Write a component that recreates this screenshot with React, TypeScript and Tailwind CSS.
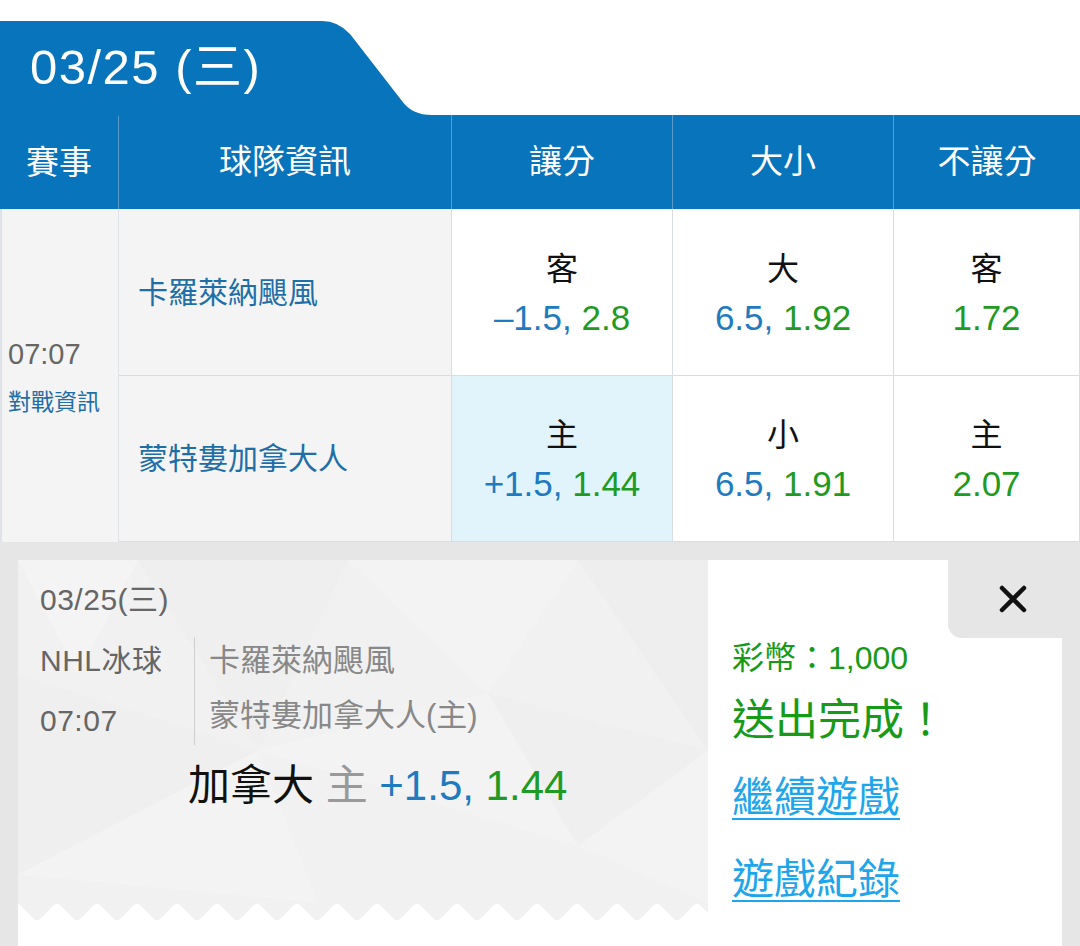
import React from "react";

const font = { fontFamily: '"Liberation Sans", "Noto Sans CJK TC", sans-serif' };

const odds = [
  [
    { label: "客", line: "–1.5,", price: "2.8" },
    { label: "大", line: "6.5,", price: "1.92" },
    { label: "客", line: "", price: "1.72" },
  ],
  [
    { label: "主", line: "+1.5,", price: "1.44", picked: true },
    { label: "小", line: "6.5,", price: "1.91" },
    { label: "主", line: "", price: "2.07" },
  ],
];
const teams = ["卡羅萊納颶風", "蒙特婁加拿大人"];

function OddsCell({ o }: { o: { label: string; line: string; price: string; picked?: boolean } }) {
  return (
    <div
      className={`flex flex-col items-center justify-center border-r border-b border-[#d6dde4] pt-[4px] ${
        o.picked ? "bg-[#e1f4fc]" : "bg-white"
      }`}
    >
      <div className="text-[32px] leading-[40px] text-[#111]">{o.label}</div>
      <div className="mt-[7px] text-[35px] leading-[44px]">
        {o.line && <span className="text-[#1f7bbf]">{o.line} </span>}
        <span className="text-[#1f9a23]">{o.price}</span>
      </div>
    </div>
  );
}

function Pattern() {
  return (
    <svg className="absolute inset-0 h-full w-full" viewBox="0 0 690 360" preserveAspectRatio="none">
      <polygon points="0,0 120,0 60,120" fill="#f4f4f4" />
      <polygon points="120,0 330,0 240,200" fill="#efefef" />
      <polygon points="330,0 560,0 470,140" fill="#f3f3f3" />
      <polygon points="560,0 690,0 690,200" fill="#eeeeee" />
      <polygon points="0,120 240,200 0,330" fill="#efefef" />
      <polygon points="240,200 470,140 560,300" fill="#f3f3f3" />
      <polygon points="470,140 690,200 560,300" fill="#efefef" />
      <polygon points="0,330 240,200 300,360" fill="#f3f3f3" />
      <polygon points="560,300 690,200 690,360" fill="#f3f3f3" />
    </svg>
  );
}

function Zigzag() {
  return (
    <svg className="block h-[17px] w-full" preserveAspectRatio="none">
      <defs>
        <pattern id="zz" width="40" height="17" patternUnits="userSpaceOnUse" x="19">
          <rect width="40" height="17" fill="#f1f1f1" />
          <path d="M2 17 L17 2 Q20 -1 23 2 L38 17 Z" fill="#ffffff" />
        </pattern>
      </defs>
      <rect width="100%" height="17" fill="url(#zz)" />
    </svg>
  );
}

export default function App() {
  return (
    <div className="w-[1080px] h-[946px] overflow-hidden bg-white" style={font}>
      {/* Date tab */}
      <div className="flex pt-[21px]">
        <div className="flex h-[94px] w-[310px] items-center bg-[#0874bc] pl-[30px] text-[49px] tracking-[1.5px] text-white">
          03/25 (三)
        </div>
        <svg width="122" height="94" viewBox="0 0 122 94" className="block">
          <path d="M0 0 H12 Q28 0 40 13 L92 80 Q102 94 122 94 H0 Z" fill="#0874bc" />
        </svg>
      </div>

      {/* Table */}
      <div className="grid grid-cols-[119px_333px_221px_221px_1fr] grid-rows-[94px_167px_166px]">
        {["賽事", "球隊資訊", "讓分", "大小", "不讓分"].map((h, i) => (
          <div
            key={h}
            className={`flex items-center justify-center bg-[#0874bc] text-[33px] text-white ${
              i < 4 ? "border-r border-[#5b9bcc]" : ""
            } ${i === 0 ? "border-t-2 border-t-[#0874bc]" : ""}`}
          >
            {h}
          </div>
        ))}

        <div className="row-span-2 flex flex-col justify-center border-r border-l-2 border-[#dde3e8] bg-[#f4f4f4] pl-[6px]">
          <div className="text-[29px] leading-[36px] text-[#666]">07:07</div>
          <div className="mt-[16px] text-[23px] leading-[28px] text-[#1f6ea8]">對戰資訊</div>
        </div>

        {teams.map((t, r) => (
          <React.Fragment key={t}>
            <div className="flex items-center border-r border-b border-[#d6dde4] bg-[#f4f4f4] pl-[19px] text-[30px] text-[#1f6ea8]">
              {t}
            </div>
            {odds[r].map((o, c) => (
              <OddsCell key={c} o={o} />
            ))}
          </React.Fragment>
        ))}
      </div>

      {/* Bet slip */}
      <div className="h-[404px] bg-[#e6e6e6] px-[18px] pt-[18px]">
        <div className="flex h-full bg-white">
          <div className="flex w-[690px] flex-col">
            <div className="relative h-[343px] bg-[#f1f1f1]">
              <Pattern />
              <div className="relative pl-[22px] pt-[21px] text-[30px] tracking-[0.5px] text-[#666]">
                <div className="leading-[38px]">03/25(三)</div>
                <div className="mt-[18px] flex">
                  <div className="w-[155px] border-r border-[#cfcfcf]">
                    <div className="leading-[48px]">NHL冰球</div>
                    <div className="mt-[12px] leading-[48px]">07:07</div>
                  </div>
                  <div className="pl-[14px] text-[31px] tracking-normal text-[#888]">
                    <div className="leading-[48px]">卡羅萊納颶風</div>
                    <div className="mt-[7px] leading-[48px]">蒙特婁加拿大人(主)</div>
                  </div>
                </div>
                <div className="mt-[16px] pl-[148px] text-[42px] leading-[50px] tracking-normal">
                  <span className="text-[#111]">加拿大 </span>
                  <span className="text-[#999]">主 </span>
                  <span className="text-[#1f7bbf]">+1.5, </span>
                  <span className="text-[#1f9a23]">1.44</span>
                </div>
              </div>
            </div>
            <Zigzag />
          </div>

          <div className="flex flex-1 flex-col">
            <div className="flex justify-end">
              <div className="flex h-[78px] w-[114px] items-center justify-center rounded-bl-[14px] bg-[#e6e6e6] pl-[16px]">
                <svg width="30" height="30" viewBox="0 0 30 30">
                  <path d="M4 4 L26 26 M26 4 L4 26" stroke="#111" strokeWidth="4.5" strokeLinecap="round" />
                </svg>
              </div>
            </div>
            <div className="pl-[24px]">
              <div className="text-[32px] leading-[40px] text-[#179a17]">彩幣：1,000</div>
              <div className="mt-[17px] text-[43px] leading-[50px] text-[#179a17]">送出完成！</div>
              <div className="mt-[28px] text-[42px] leading-[50px] text-[#1ea6ec] underline underline-offset-[6px] decoration-2">
                繼續遊戲
              </div>
              <div className="mt-[32px] text-[42px] leading-[50px] text-[#1ea6ec] underline underline-offset-[6px] decoration-2">
                遊戲紀錄
              </div>
            </div>
          </div>
        </div>
      </div>
    </div>
  );
}
